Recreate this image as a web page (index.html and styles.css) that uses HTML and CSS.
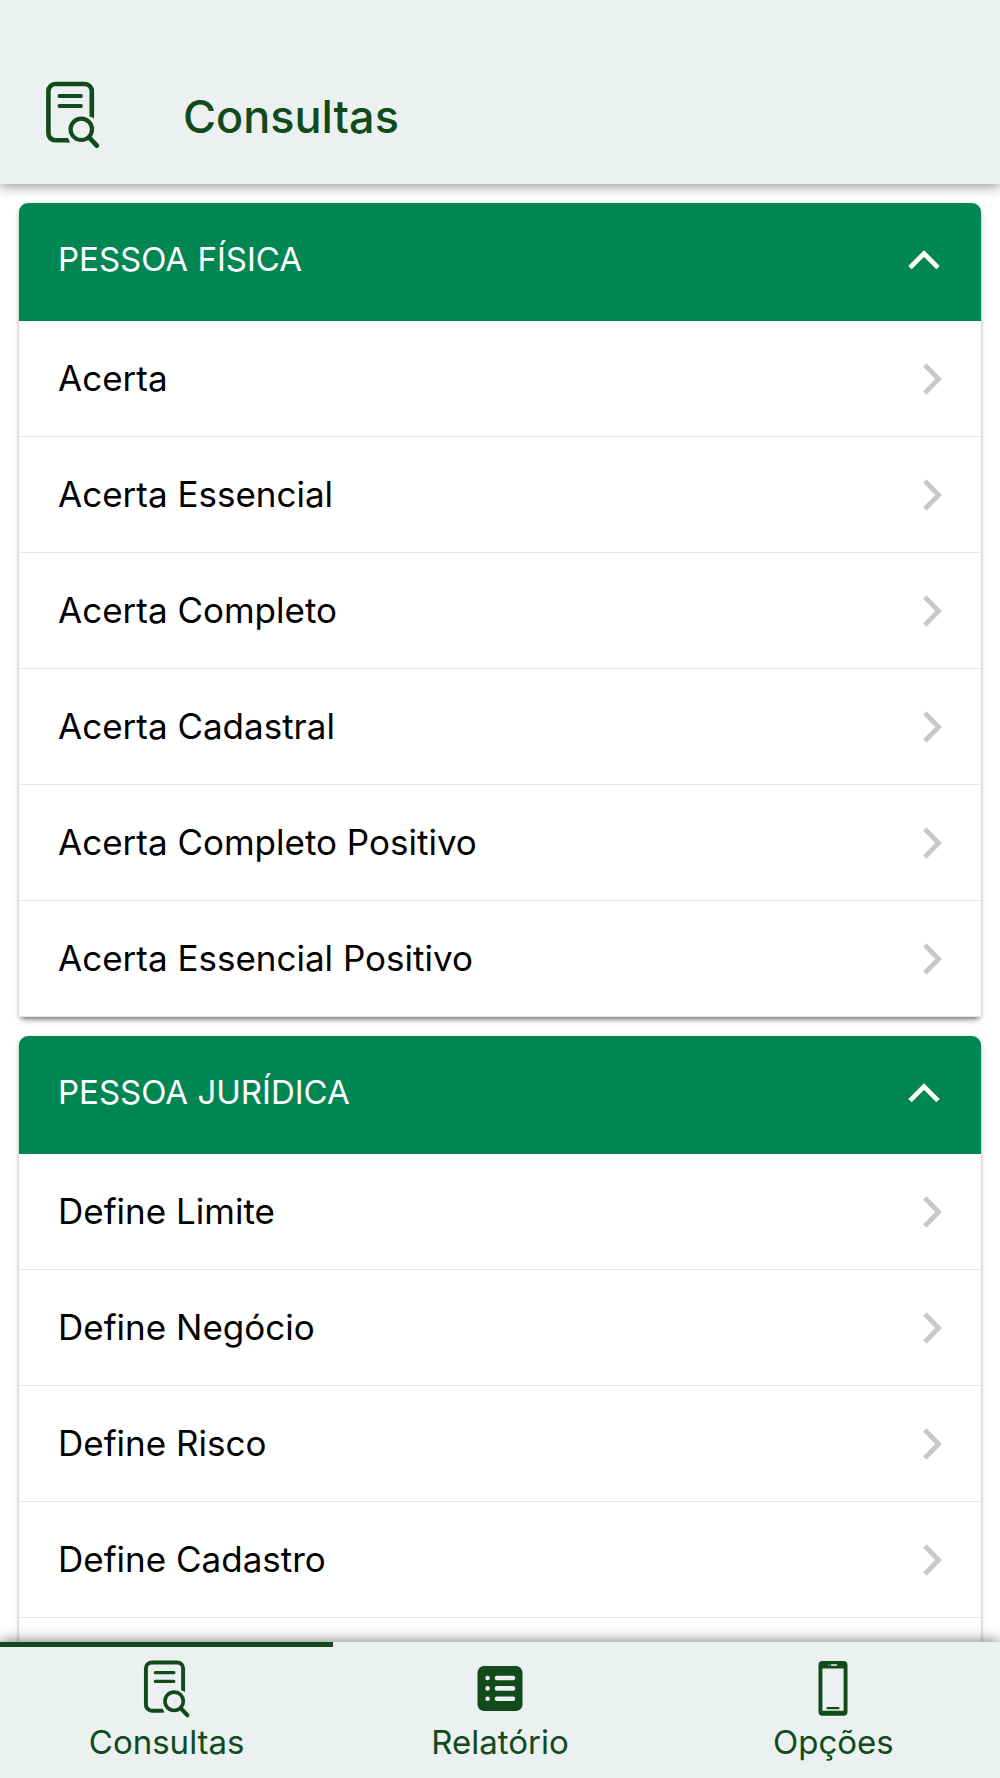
FILE: index.html
```html
<!DOCTYPE html>
<html lang="pt-BR">
<head>
  <meta charset="utf-8">
  <meta name="viewport" content="width=device-width, initial-scale=1">
  <title>Consultas</title>
  <link rel="stylesheet" href="styles.css">
</head>
<body>
  <svg class="sprite" aria-hidden="true">
    <symbol id="doc-search" viewBox="0 0 56 70">
      <g fill="none" stroke="currentColor">
        <path d="M46.800 36.600V11a7 7 0 0 0-7-7H10.400a7 7 0 0 0-7 7v42.300a7 7 0 0 0 7 7h12.400" stroke-width="4.600"/>
        <path d="M44.600 36.200l4.400 2.400v-3h-4.400zM22 58.100h1l2 4.400h-3z" fill="currentColor" stroke="none"/>
        <path d="M14.400 16h21.600M14.400 26h21.600" stroke-width="3.800" stroke-linecap="round"/>
        <circle cx="36.300" cy="49.300" r="10.700" stroke-width="4.200"/>
        <path d="M44.500 57.800l7.300 7.800" stroke-width="4.800" stroke-linecap="round"/>
      </g>
    </symbol>
    <symbol id="list" viewBox="0 0 60 60">
      <rect x="7.500" y="7" width="45" height="45" rx="6.500" fill="currentColor"/>
      <g fill="none" stroke="#ebf0f0" stroke-width="4.600" stroke-linecap="round">
        <path d="M27 19h16M27 29.400h16M27 39.800h16"/>
        <path d="M17.600 19h.01M17.600 29.400h.01M17.600 39.800h.01"/>
      </g>
    </symbol>
    <symbol id="phone" viewBox="0 0 60 60">
      <path fill="currentColor" fill-rule="evenodd" d="M19.500 2h21a4 4 0 0 1 4 4v46.700a4 4 0 0 1-4 4h-21a4 4 0 0 1-4-4V6a4 4 0 0 1 4-4zM19.400 9.500v42.200h21.200V9.500z"/>
      <path d="M28.500 6h5" stroke="#ebf0f0" stroke-width="1.600" stroke-linecap="round"/>
      <circle cx="26" cy="6" r=".6" fill="#ebf0f0"/>
      <path d="M24.500 49.200h11" stroke="currentColor" stroke-width="2.200" stroke-linecap="round"/>
    </symbol>
    <symbol id="up" viewBox="0 0 32 20">
      <path d="M2 17.600L16 3.600l14 14" fill="none" stroke="currentColor" stroke-width="4.800"/>
    </symbol>
    <symbol id="right" viewBox="0 0 20 32">
      <path d="M2.800 2L16.600 16 2.800 30" fill="none" stroke="currentColor" stroke-width="4.800"/>
    </symbol>
  </svg>

  <div class="app">
    <header class="topbar">
      <svg class="topbar-icon" aria-hidden="true"><use href="#doc-search"/></svg>
      <h1 class="topbar-title">Consultas</h1>
    </header>

    <main class="content">
      <section class="card">
        <h2 class="card-heading">
          <button class="card-toggle" type="button" aria-expanded="true">
            <span class="label">PESSOA FÍSICA</span>
            <svg class="icon-up" aria-hidden="true"><use href="#up"/></svg>
          </button>
        </h2>
        <ul class="list">
          <li><a class="row" href="#"><span class="label">Acerta</span><svg class="icon-right" aria-hidden="true"><use href="#right"/></svg></a></li>
          <li><a class="row" href="#"><span class="label">Acerta Essencial</span><svg class="icon-right" aria-hidden="true"><use href="#right"/></svg></a></li>
          <li><a class="row" href="#"><span class="label">Acerta Completo</span><svg class="icon-right" aria-hidden="true"><use href="#right"/></svg></a></li>
          <li><a class="row" href="#"><span class="label">Acerta Cadastral</span><svg class="icon-right" aria-hidden="true"><use href="#right"/></svg></a></li>
          <li><a class="row" href="#"><span class="label">Acerta Completo Positivo</span><svg class="icon-right" aria-hidden="true"><use href="#right"/></svg></a></li>
          <li><a class="row" href="#"><span class="label">Acerta Essencial Positivo</span><svg class="icon-right" aria-hidden="true"><use href="#right"/></svg></a></li>
        </ul>
      </section>

      <section class="card">
        <h2 class="card-heading">
          <button class="card-toggle" type="button" aria-expanded="true">
            <span class="label">PESSOA JURÍDICA</span>
            <svg class="icon-up" aria-hidden="true"><use href="#up"/></svg>
          </button>
        </h2>
        <ul class="list list-open">
          <li><a class="row" href="#"><span class="label">Define Limite</span><svg class="icon-right" aria-hidden="true"><use href="#right"/></svg></a></li>
          <li><a class="row" href="#"><span class="label">Define Negócio</span><svg class="icon-right" aria-hidden="true"><use href="#right"/></svg></a></li>
          <li><a class="row" href="#"><span class="label">Define Risco</span><svg class="icon-right" aria-hidden="true"><use href="#right"/></svg></a></li>
          <li><a class="row" href="#"><span class="label">Define Cadastro</span><svg class="icon-right" aria-hidden="true"><use href="#right"/></svg></a></li>
        </ul>
      </section>
    </main>

    <nav class="tabs">
      <a class="tab tab-active" href="#" aria-current="page">
        <svg class="tab-doc" aria-hidden="true"><use href="#doc-search"/></svg>
        <span>Consultas</span>
      </a>
      <a class="tab" href="#">
        <svg class="tab-icon" aria-hidden="true"><use href="#list"/></svg>
        <span>Relatório</span>
      </a>
      <a class="tab" href="#">
        <svg class="tab-icon" aria-hidden="true"><use href="#phone"/></svg>
        <span>Opções</span>
      </a>
    </nav>
  </div>
</body>
</html>
```
FILE: styles.css
```css
* {
  box-sizing: border-box;
}

body {
  margin: 0;
  background: #fff;
  color: #000;
  font-family: Inter, "Liberation Sans", sans-serif;
}

svg {
  display: block;
  flex: none;
}

.sprite {
  position: absolute;
  width: 0;
  height: 0;
}

.app {
  display: flex;
  flex-direction: column;
  height: 100vh;
}

.topbar {
  z-index: 1;
  display: flex;
  flex: none;
  align-items: center;
  gap: 82px;
  padding: 80px 45px 34px;
  background: #ebf0f0;
  color: #114b1c;
  box-shadow: 0 2px 12px rgba(0, 0, 0, 0.45);
}

.topbar-icon {
  width: 56px;
  height: 70px;
}

.topbar-title {
  margin: 0;
  padding-top: 3px;
  font-size: 45px;
  font-weight: 500;
  line-height: 56px;
}

.content {
  display: flex;
  flex: 1;
  flex-direction: column;
  gap: 19px;
  min-height: 0;
  padding: 19px;
  overflow: hidden;
}

.card {
  flex: none;
  border-radius: 9px 9px 2px 2px;
  background: #fff;
  box-shadow: 0 5px 6px -3px rgba(0, 0, 0, 0.5), 0 1px 4px rgba(0, 0, 0, 0.2);
}

.card-heading {
  margin: 0;
}

.card-toggle {
  display: flex;
  align-items: center;
  justify-content: space-between;
  width: 100%;
  height: 118px;
  padding: 0 41px 4px 39px;
  border: 0;
  border-radius: 9px 9px 0 0;
  background: #008653;
  color: #fff;
  font-family: inherit;
  font-size: 33px;
  font-weight: 400;
}

.label {
  padding-bottom: 2px;
}

.icon-up {
  width: 32px;
  height: 20px;
}

.list {
  margin: 0;
  padding: 0;
  list-style: none;
}

.row {
  display: flex;
  align-items: center;
  justify-content: space-between;
  height: 116px;
  padding: 0 39px;
  border-bottom: 1px solid #e6e6e6;
  color: inherit;
  font-size: 35px;
  text-decoration: none;
}

.list-open {
  padding-bottom: 116px;
}

.icon-right {
  width: 20px;
  height: 32px;
  color: #c8c8c8;
}

.tabs {
  z-index: 1;
  display: grid;
  flex: none;
  grid-template-columns: repeat(3, 1fr);
  background: #ebf0f0;
  box-shadow: 0 -2px 12px rgba(0, 0, 0, 0.45);
}

.tab {
  display: flex;
  flex-direction: column;
  align-items: center;
  gap: 3px;
  padding: 12px 0 16px;
  border-top: 5px solid transparent;
  color: #114b1c;
  font-size: 33px;
  line-height: 40px;
  text-decoration: none;
}

.tab-active {
  border-top-color: #114b1c;
}

.tab-doc {
  width: 48px;
  height: 60px;
}

.tab-icon {
  width: 60px;
  height: 60px;
}
```
